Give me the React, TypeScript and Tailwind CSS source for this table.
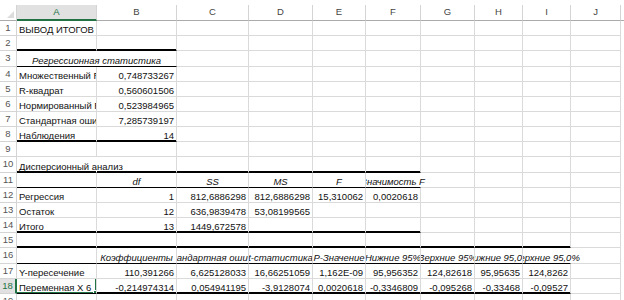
import React from "react";

type Cell = {
  t?: string;
  a?: "l" | "r" | "c";
  i?: boolean;
  b?: "thick" | "thin";
  nr?: boolean;
  clip?: "left" | "none";
  span?: number;
};

const cols = ["A", "B", "C", "D", "E", "F", "G", "H", "I", "J"];

const r = (t: string): Cell => ({ t, a: "r" });
const hd = (t: string, extra: Partial<Cell> = {}): Cell => ({ t, a: "c", i: true, b: "thin", ...extra });
const thick = (t?: string, a: Cell["a"] = "r"): Cell => ({ t, a, b: "thick" });

const rows: Cell[][] = [
  [{ t: "ВЫВОД ИТОГОВ" }],
  [{ b: "thick" }, { b: "thick" }],
  [{ t: "Регрессионная статистика", a: "c", i: true, b: "thin", span: 2 }],
  [{ t: "Множественный R" }, r("0,748733267")],
  [{ t: "R-квадрат" }, r("0,560601506")],
  [{ t: "Нормированный R-квадрат" }, r("0,523984965")],
  [{ t: "Стандартная ошибка" }, r("7,285739197")],
  [thick("Наблюдения", "l"), thick("14")],
  [],
  [
    { t: "Дисперсионный анализ", b: "thick", nr: true, clip: "none" },
    thick(), thick(), thick(), thick(), thick(),
  ],
  [
    { b: "thin" },
    hd("df"),
    hd("SS"),
    hd("MS"),
    hd("F"),
    hd("Значимость F", { clip: "left", nr: true }),
  ],
  [{ t: "Регрессия" }, r("1"), r("812,6886298"), r("812,6886298"), r("15,310062"), r("0,0020618")],
  [{ t: "Остаток" }, r("12"), r("636,9839478"), r("53,08199565")],
  [thick("Итого", "l"), thick("13"), thick("1449,672578"), thick(), thick(), thick()],
  [thick(), thick(), thick(), thick(), thick(), thick(), thick(), thick(), thick()],
  [
    { b: "thin" },
    hd("Коэффициенты"),
    hd("Стандартная ошибка"),
    hd("t-статистика"),
    hd("P-Значение"),
    hd("Нижние 95%"),
    hd("Верхние 95%"),
    hd("Нижние 95,0%"),
    hd("Верхние 95,0%", { clip: "left", nr: true }),
  ],
  [
    { t: "Y-пересечение" },
    r("110,391266"),
    r("6,625128033"),
    r("16,66251059"),
    r("1,162E-09"),
    r("95,956352"),
    r("124,82618"),
    r("95,95635"),
    r("124,8262"),
  ],
  [
    thick("Переменная X 6", "l"),
    thick("-0,214974314"),
    thick("0,054941195"),
    thick("-3,9128074"),
    thick("0,0020618"),
    thick("-0,3346809"),
    thick("-0,095268"),
    thick("-0,33468"),
    thick("-0,09527"),
  ],
  [],
];

const SELECTED_ROW = 18;

function DataCell({ cell, selected }: { cell: Cell; selected?: boolean }) {
  const align =
    cell.a === "r" ? "justify-end pr-[2px]" : cell.a === "c" ? "justify-center" : "justify-start pl-[2px]";
  const bottom =
    cell.b === "thick"
      ? "border-b-black shadow-[inset_0_-1px_0_#000]"
      : cell.b === "thin"
        ? "border-b-black"
        : "border-b-[#dadada]";
  const right = cell.nr ? "border-r-transparent" : "border-r-[#dadada]";
  const clip =
    cell.clip === "none"
      ? "overflow-visible z-10"
      : cell.clip === "left"
        ? "[clip-path:inset(0_-200px_0_0)] z-10"
        : "overflow-hidden";
  const span = cell.span === 2 ? "col-span-2" : "";

  return (
    <div className={`relative flex items-end pb-[1px] border-r border-b ${right} ${bottom} ${align} ${clip} ${span}`}>
      {cell.t && (
        <span className={`whitespace-nowrap leading-none shrink-0 ${cell.i ? "italic" : ""}`}>{cell.t}</span>
      )}
      {selected && (
        <>
          <div className="absolute -left-[2px] -top-[2px] -right-[1px] -bottom-[1px] border-2 border-[#217346] pointer-events-none" />
          <div className="absolute -right-[3px] -bottom-[3px] w-[6px] h-[6px] bg-[#217346] border border-white" />
        </>
      )}
    </div>
  );
}

export default function App() {
  return (
    <div
      className="w-[624px] h-[300px] overflow-hidden bg-white pt-[5px] text-[9.5px] text-[#111]"
      style={{ fontFamily: '"Liberation Sans", Arial, sans-serif' }}
    >
      <div className="grid grid-cols-[17px_80px_80px_72px_64px_53px_55px_54px_48px_48px_50px_1fr] grid-rows-[16px_15px_15px_16px_15px_15px_15px_15px_15px_15px_16px_15px_15px_15px_15px_15px_16px_15px_15px_15px]">
        {/* corner */}
        <div className="flex items-end justify-end pr-[2px] pb-[2px] border-r border-b border-r-[#d4d4d4] border-b-[#ababab]">
          <svg width="7" height="7" viewBox="0 0 7 7">
            <polygon points="7,0 7,7 0,7" fill="#dcdcdc" />
          </svg>
        </div>
        {/* column headers */}
        {cols.map((c) =>
          c === "A" ? (
            <div
              key={c}
              className="flex items-center justify-center bg-[#e1e1e1] text-[#217346] border-r border-r-[#d4d4d4] border-b-2 border-b-[#217346]"
            >
              {c}
            </div>
          ) : (
            <div
              key={c}
              className="flex items-center justify-center text-[#444] border-r border-b border-r-[#d4d4d4] border-b-[#ababab]"
            >
              {c}
            </div>
          )
        )}
        <div className="border-b border-b-[#ababab]" />

        {rows.map((row, ri) => {
          const n = ri + 1;
          const cells: Cell[] = [];
          let used = 0;
          for (const c of row) {
            cells.push(c);
            used += c.span ?? 1;
          }
          while (used < 10) {
            cells.push({});
            used++;
          }
          return (
            <React.Fragment key={n}>
              {n === SELECTED_ROW ? (
                <div className="flex items-center justify-center bg-[#e1e1e1] text-[#217346] border-b border-b-[#d4d4d4] border-r-2 border-r-[#217346]">
                  {n}
                </div>
              ) : (
                <div className="flex items-center justify-center text-[#555] border-r border-b border-[#d4d4d4]">{n}</div>
              )}
              {cells.map((c, ci) => (
                <DataCell key={ci} cell={c} selected={n === SELECTED_ROW && ci === 0} />
              ))}
              <div />
            </React.Fragment>
          );
        })}
      </div>
    </div>
  );
}
